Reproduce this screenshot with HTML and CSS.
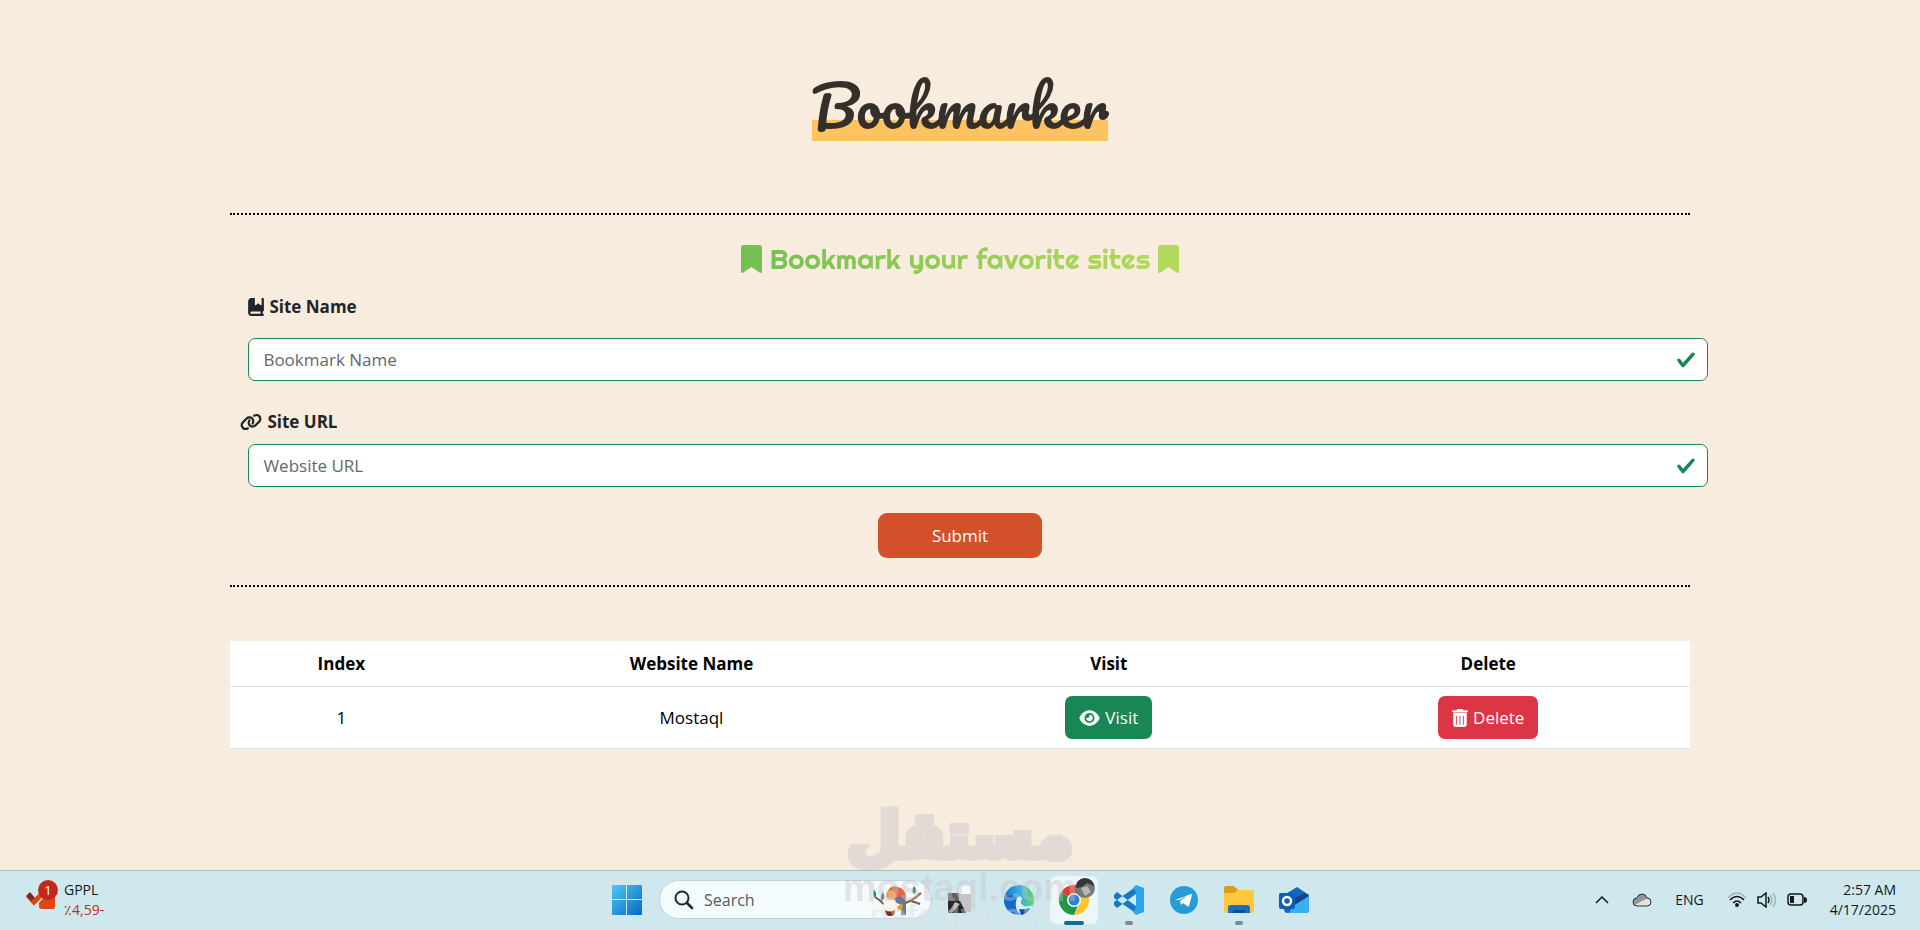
FILE: index.html
```html
<!DOCTYPE html>
<html lang="en">
<head>
  <meta charset="UTF-8">
  <meta name="viewport" content="width=device-width, initial-scale=1.0">
  <title>Bookmarker</title>
  <link rel="stylesheet" href="styles.css">
</head>
<body>
  <main class="container">
    <!-- Title -->
    <header class="page-header">
      <h1 class="title">Bookmarker</h1>
    </header>

    <!-- Bookmark Form -->
    <form class="bookmark-form">
      <h2 class="subtitle">
        <svg class="icon-mark" viewBox="0 0 384 512"><path fill="#77c153" d="M0 48V487.700C0 501 11 512 24.300 512c5 0 9.900-1.500 14-4.400L192 400 345.700 507.600c4.100 2.900 9 4.400 14 4.400 13.400 0 24.300-11 24.300-24.300V48c0-26.500-21.500-48-48-48H48C21.500 0 0 21.500 0 48z"/></svg>
        <span class="subtitle-text">Bookmark your favorite sites</span>
        <svg class="icon-mark" viewBox="0 0 384 512"><path fill="#b2d95b" d="M0 48V487.700C0 501 11 512 24.300 512c5 0 9.900-1.500 14-4.400L192 400 345.700 507.600c4.100 2.900 9 4.400 14 4.400 13.400 0 24.300-11 24.300-24.300V48c0-26.500-21.500-48-48-48H48C21.500 0 0 21.500 0 48z"/></svg>
      </h2>

      <label class="label-name" for="siteName">
        <svg class="icon-book" viewBox="0 0 448 512"><path fill="currentColor" fill-rule="evenodd" d="M0 96C0 43 43 0 96 0h96v190.700c0 13.400 15.500 20.900 26 12.500l70-56 70 56c10.500 8.400 26 .9 26-12.500V0h32c17.700 0 32 14.300 32 32v320c0 17.700-14.300 32-32 32v64c17.700 0 32 14.300 32 32s-14.300 32-32 32H96c-53 0-96-43-96-96V96zm64 320c0 17.700 14.300 32 32 32h256v-64H96c-17.700 0-32 14.300-32 32z"/></svg>
        Site Name
      </label>
      <div class="field">
        <input class="form-control" type="text" id="siteName" placeholder="Bookmark Name">
      </div>

      <label class="label-url" for="siteUrl">
        <svg class="icon-link" viewBox="0 0 640 512"><path fill="currentColor" d="M579.800 267.700c56.500-56.500 56.500-148 0-204.500-50-50-128.800-56.500-186.300-15.400l-1.600 1.100c-14.400 10.300-17.700 30.300-7.400 44.600s30.300 17.700 44.600 7.400l1.600-1.100c32.100-22.900 76-19.300 103.800 8.600 31.500 31.500 31.500 82.500 0 114L422.300 334.800c-31.500 31.500-82.500 31.500-114 0-27.900-27.900-31.500-71.800-8.600-103.800l1.100-1.600c10.300-14.400 6.900-34.400-7.400-44.600s-34.400-6.900-44.600 7.400l-1.100 1.600C206.500 251.200 213 330 263 380c56.500 56.500 148 56.500 204.500 0L579.800 267.700zM60.200 244.300c-56.500 56.500-56.500 148 0 204.500 50 50 128.800 56.500 186.300 15.400l1.600-1.100c14.400-10.300 17.700-30.300 7.400-44.600s-30.300-17.700-44.600-7.400l-1.600 1.100c-32.100 22.900-76 19.300-103.800-8.600C74 372 74 321 105.500 289.500L217.700 177.200c31.500-31.500 82.500-31.500 114 0 27.900 27.900 31.500 71.800 8.600 103.900l-1.100 1.600c-10.300 14.400-6.900 34.400 7.400 44.600s34.400 6.900 44.600-7.400l1.100-1.600C433.500 260.800 427 182 377 132c-56.500-56.500-148-56.500-204.500 0L60.200 244.300z"/></svg>
        Site URL
      </label>
      <div class="field">
        <input class="form-control" type="text" id="siteUrl" placeholder="Website URL">
      </div>

      <button class="submit-btn" type="submit">Submit</button>
    </form>

    <!-- Bookmarks Table -->
    <table class="table">
      <thead>
        <tr>
          <th class="col-index">Index</th>
          <th class="col-name">Website Name</th>
          <th class="col-visit">Visit</th>
          <th class="col-delete">Delete</th>
        </tr>
      </thead>
      <tbody>
        <tr>
          <td>1</td>
          <td>Mostaql</td>
          <td>
            <button class="btn btn-visit" type="button">
              <svg class="icon-eye" viewBox="0 0 576 512"><path fill="currentColor" fill-rule="evenodd" d="M288 32c-80.800 0-145.500 36.800-192.600 80.600C48.600 156 17.300 208 2.500 243.700c-3.300 7.900-3.300 16.700 0 24.600C17.300 304 48.600 356 95.400 399.400 142.500 443.200 207.200 480 288 480s145.500-36.800 192.600-80.600c46.800-43.500 78.100-95.400 93-131.100 3.300-7.900 3.300-16.700 0-24.600-14.900-35.700-46.200-87.700-93-131.100C433.500 68.800 368.800 32 288 32zM144 256a144 144 0 1 1 288 0 144 144 0 1 1-288 0zm144-64c0 35.300-28.700 64-64 64-7.100 0-13.900-1.200-20.300-3.300-5.500-1.800-11.900 1.600-11.700 7.400.3 6.900 1.300 13.800 3.200 20.700 13.700 51.200 66.400 81.600 117.600 67.900s81.600-66.400 67.900-117.600c-11.100-41.500-47.800-69.400-88.600-71.100-5.800-.2-9.200 6.100-7.400 11.700 2.100 6.400 3.300 13.200 3.300 20.300z"/></svg>
              Visit
            </button>
          </td>
          <td>
            <button class="btn btn-delete" type="button">
              <svg class="icon-trash" viewBox="0 0 448 512"><path fill="currentColor" fill-rule="evenodd" d="M135.200 17.700C140.600 6.800 151.700 0 163.800 0h120.400c12.100 0 23.200 6.800 28.600 17.700L320 32h96c17.700 0 32 14.300 32 32s-14.300 32-32 32H32C14.300 96 0 81.700 0 64s14.300-32 32-32h96l7.200-14.300zM32 116h384v332c0 35.300-28.700 64-64 64H96c-35.300 0-64-28.700-64-64V116zm84 76v256h24V192h-24zm96 0v256h24V192h-24zm96 0v256h24V192h-24z"/></svg>
              Delete
            </button>
          </td>
        </tr>
      </tbody>
    </table>
  </main>

  <!-- Taskbar -->
  <footer class="taskbar">
    <div class="widget">
      <svg class="widget-icon" viewBox="0 0 34 32">
        <path d="M3 15l6 7 7-7" fill="none" stroke="#d9480f" stroke-width="5"/>
        <path d="M1 16l4-4 5 6-4 3z" fill="#7c2d1b"/>
        <path d="M14 23l5-6h11v10q0 2-2 2H17q-3 0-3-3z" fill="#dc4a0b"/>
        <circle cx="23" cy="10" r="10" fill="#c4281c"/>
        <text x="23" y="15" text-anchor="middle" class="badge-text">1</text>
      </svg>
      <div class="widget-text">
        <span>GPPL</span>
        <span class="widget-change">٪4,59-</span>
      </div>
    </div>

    <div class="apps">
      <button class="app" type="button" aria-label="Start">
        <svg width="30" height="30" viewBox="0 0 30 30">
          <defs><linearGradient id="win" x1="0" y1="0" x2="1" y2="1"><stop offset="0" stop-color="#4cc8f2"/><stop offset="1" stop-color="#0668c4"/></linearGradient></defs>
          <path fill="url(#win)" d="M1 0h13v14H0V1q0-1 1-1zM15 0h14q1 0 1 1v13H15zM0 15h14v15H1q-1 0-1-1zM15 15h15v14q0 1-1 1H15z"/>
        </svg>
      </button>
      <div class="search-bar">
        <svg width="20" height="20" viewBox="0 0 20 20"><circle cx="8" cy="8" r="6.500" fill="none" stroke="#23282c" stroke-width="2"/><path d="M13 13l5 5" stroke="#23282c" stroke-width="2.500" stroke-linecap="round"/></svg>
        <input type="text" placeholder="Search" aria-label="Search">
        <svg class="bird" width="54" height="36" viewBox="0 0 54 36">
          <path d="M4 15q10 6 14 16M31 22q9-2 19-11M40 19l9 3" fill="none" stroke="#8a4a32" stroke-width="2"/>
          <path d="M3 8q4 3 1 8-3-4-1-8zM12 10q3 5-1 9-3-4 1-9zM43 4q4 5 0 8-3-3 0-8z" fill="#24806a"/>
          <path d="M16 12Q18 2 27 5q9 3 8 11-4 5-9 3-7-2-10-7z" fill="#e0683f"/>
          <circle cx="20" cy="13" r="5" fill="#f2a05e"/>
          <path d="M26 15q8-2 9 4v14h-5V23l-6-3z" fill="#697895"/>
          <circle cx="19" cy="24" r="7" fill="#f8f3e8"/>
          <path d="M14 28q5 3 10 0 0 6-5 6t-5-6z" fill="#7b2c15"/>
          <path d="M26 25l5-4 1 4-4 4z" fill="#e99a26"/>
        </svg>
      </div>
      <button class="app app-view" type="button" aria-label="Task view">
        <svg width="24" height="28" viewBox="0 0 24 28">
          <path d="M11 0h10q2 0 2 2v8H11z" fill="#f6f7f7"/>
          <path d="M0 7h11v8H0z" fill="#5f5f60"/><path d="M11 8h12v18H11z" fill="#c5c3c4"/>
          <path d="M0 15h12l6 12H2q-2 0-2-2z" fill="#252628"/><path d="M1 26l6-10 5 2-8 9z" fill="#aaa9aa"/>
        </svg>
      </button>
      <button class="app" type="button" aria-label="Edge">
        <svg width="30" height="30" viewBox="0 0 30 30">
          <defs><linearGradient id="edge" x1="0" y1="0" x2="1" y2="0"><stop offset="0" stop-color="#1673d1"/><stop offset=".55" stop-color="#35b4df"/><stop offset="1" stop-color="#63d45c"/></linearGradient></defs>
          <circle cx="15" cy="15" r="15" fill="url(#edge)"/>
          <path d="M0 14Q7 7 13 13q-4 9 3 16Q1 30 0 14z" fill="#126bc8"/>
          <path d="M13 13q4-4 5 1-3 5 2 7 5 1 9-1-3 8-11 10-9-5-5-17z" fill="#d9eef5"/>
          <path d="M15 24q6 1 11-1-3 6-9 7z" fill="#12549f"/>
        </svg>
      </button>
      <button class="app app-active" type="button" aria-label="Chrome">
        <svg class="app-tile" width="48" height="48" viewBox="0 0 48 48">
          <path d="M24 24L11 16.500A15 15 0 0 1 37 16.500z" fill="#e33b2e"/>
          <path d="M11 16.500A15 15 0 0 0 24 39l5-12-5-3z" fill="#249447"/>
          <path d="M37 16.500A15 15 0 0 1 24 39l6-12-2-10.500z" fill="#fbc52b"/>
          <circle cx="24" cy="24" r="7" fill="#fff"/><circle cx="24" cy="24" r="5.500" fill="#2d7fdc"/>
          <circle cx="35" cy="12" r="10" fill="#75797a"/>
          <path d="M26 12q0-9 9-10 8 1 9 8l-7-3-5 4z" fill="#333738"/>
          <path d="M31 12l6-2 4 6-6 4z" fill="#b4b9ba"/>
        </svg>
        <span class="indicator indicator-active"></span>
      </button>
      <button class="app" type="button" aria-label="Visual Studio Code">
        <svg width="30" height="30" viewBox="0 0 30 30">
          <path d="M0 10l3-3 20 15v7L0 13zM0 20l3 3L23 8V1L0 17z" fill="#1279c8"/>
          <path d="M22 0l8 3v24l-8 3-3-3 3-5V8l-3-5z" fill="#2ba4ed"/>
        </svg>
        <span class="indicator"></span>
      </button>
      <button class="app" type="button" aria-label="Telegram">
        <svg width="28" height="28" viewBox="0 0 28 28">
          <circle cx="14" cy="14" r="14" fill="#269bd8"/>
          <path d="M5 14l16-6q1 0 1 1l-3 11q-1 1-2 0l-4-3-2 2-1-4 8-6-9 5z" fill="#fff"/>
        </svg>
      </button>
      <button class="app" type="button" aria-label="File Explorer">
        <svg width="30" height="28" viewBox="0 0 30 28">
          <path d="M0 2q0-2 2-2h8l4 4v6H0z" fill="#dd9b1e"/>
          <path d="M0 7h10l4-3h14q2 0 2 2v20q0 1-2 1H2q-2 0-2-2z" fill="#fdc93b"/>
          <path d="M4 27v-5q0-3 3-3h16q3 0 3 3v5z" fill="#1671c5"/><path d="M9 24h12v3H9z" fill="#0d4f97"/>
        </svg>
        <span class="indicator"></span>
      </button>
      <button class="app" type="button" aria-label="Outlook">
        <svg width="30" height="28" viewBox="0 0 30 28">
          <path d="M5 9l13-8 12 8v15q0 3-3 3H9q-4 0-4-4z" fill="#1767b8"/>
          <path d="M14 13l12-6 4 3-14 9z" fill="#15438c"/><path d="M14 20l16-10v14q0 3-3 3H10z" fill="#3aaef0"/>
          <rect x="0" y="7" width="16" height="16" rx="2" fill="#0b5fb4"/>
          <circle cx="8" cy="15" r="4" fill="none" stroke="#fff" stroke-width="2.500"/>
        </svg>
      </button>
    </div>

    <div class="tray">
      <svg width="14" height="8" viewBox="0 0 14 8"><path d="M1 7l6-6 6 6" fill="none" stroke="#15191b" stroke-width="1.500"/></svg>
      <svg class="tray-cloud" width="20" height="14" viewBox="0 0 20 14">
        <path d="M5 13Q1 13 1 9q0-4 4-4 1-4 5-4t5 4q4 0 4 4t-4 4z" fill="#92979b"/>
        <path d="M3 12q5-3 13-7 4 2 2 6-1 2-3 2H5z" fill="#e9e2e5"/>
        <path d="M5 13Q1 13 1 9q0-4 4-4 1-4 5-4t5 4q4 0 4 4t-4 4z" fill="none" stroke="#2d3032"/>
      </svg>
      <span class="tray-lang">ENG</span>
      <div class="tray-status">
        <svg width="20" height="16" viewBox="0 0 20 16"><path d="M1 6q9-10 18 0" fill="none" stroke="#a2b4b8" stroke-width="1.500"/><path d="M3 8q7-7 14 0M6 11q4-4 8 0" fill="none" stroke="#16191b" stroke-width="1.500"/><circle cx="10" cy="13" r="2" fill="#16191b"/></svg>
        <svg width="20" height="16" viewBox="0 0 20 16"><path d="M1 5h3l5-4v14l-5-4H1zM11 5q2 3 0 6" fill="none" stroke="#16191b" stroke-width="1.500"/><path d="M13 3q4 5 0 10M16 1q5 7 0 14" fill="none" stroke="#9fb3b7" stroke-width="1.500"/></svg>
        <svg width="20" height="14" viewBox="0 0 20 14"><rect x="1" y="1" width="15" height="11" rx="3" fill="none" stroke="#16191b" stroke-width="1.500"/><rect x="3" y="3" width="4" height="7" fill="#16191b"/><path d="M17 4q3 0 3 3t-3 3z" fill="#16191b"/></svg>
      </div>
      <div class="clock">
        <span>2:57 AM</span>
        <span>4/17/2025</span>
      </div>
    </div>
  </footer>

  <!-- Watermark -->
  <div class="watermark" aria-hidden="true">
    <span class="watermark-logo" lang="ar">مستقل</span>
    <span class="watermark-site">mostaql.com</span>
    <span class="watermark-sub">nafezly.com</span>
  </div>
</body>
</html>
```

FILE: styles.css
```css
/* General Styles */
* {
  box-sizing: border-box;
}

body {
  margin: 0;
  position: relative;
  display: flex;
  flex-direction: column;
  min-height: 100vh;
  overflow-x: hidden;
  background-color: #f7ecde;
  color: #212529;
  font-family: "Segoe UI", "Open Sans", sans-serif;
  font-size: 17px;
  line-height: 27px;
}

button,
input {
  font: inherit;
}

.container {
  flex: 1;
  width: 76%;
  margin: 0 auto;
}

/* Title */
.page-header {
  display: flex;
  justify-content: center;
  padding: 70px 0 72px;
}

.title {
  margin: 0;
  color: #352f29;
  font-family: Pacifico, cursive;
  font-size: 56px;
  font-weight: 400;
  line-height: 71px;
  background: linear-gradient(transparent 50px, #fec260 50px);
}

/* Form */
.bookmark-form {
  display: flex;
  flex-direction: column;
  border-top: 2px dotted #000;
  border-bottom: 2px dotted #000;
  padding: 27px 0;
}

.subtitle {
  display: flex;
  justify-content: center;
  align-items: center;
  gap: 8px;
  margin: 0 0 17px;
  font-family: Righteous, sans-serif;
  font-size: 28px;
  font-weight: 400;
  line-height: 34px;
}

.subtitle-text {
  color: transparent;
  background: linear-gradient(to right, #77c153, #b2d95b);
  background-clip: text;
  -webkit-background-clip: text;
}

.icon-mark {
  width: 21px;
  height: 28px;
}

.label-name,
.label-url {
  display: flex;
  align-items: center;
  align-self: flex-start;
  gap: 5px;
  font-weight: 700;
}

.label-name {
  margin: 0 0 18px 18px;
}

.label-url {
  margin: 27px 0 9px 10px;
}

.icon-book {
  width: 16px;
  height: 18px;
}

.icon-link {
  width: 22px;
  height: 18px;
}

.field {
  width: 100%;
  margin-left: 18px;
}

.form-control {
  display: block;
  width: 100%;
  height: 43px;
  padding: 0 48px 0 14px;
  color: #212529;
  border: 1px solid #198754;
  border-radius: 7px;
  background: #fff url("data:image/svg+xml,%3csvg xmlns='http://www.w3.org/2000/svg' viewBox='0 0 8 8'%3e%3cpath fill='%23198754' d='M2.300 6.730.6 4.530c-.4-1.040.46-1.400 1.100-.8l1.100 1.400 3.400-3.800c.6-.63 1.600-.27 1.200.7l-4 4.600c-.43.5-.8.4-1.100.1z'/%3e%3c/svg%3e") no-repeat right 11px center / 20px 20px;
}

.form-control::placeholder {
  color: #62686c;
  opacity: 1;
}

.submit-btn {
  align-self: center;
  width: 164px;
  height: 45px;
  margin-top: 26px;
  border: none;
  border-radius: 9px;
  background-color: #d2512b;
  color: #fff;
  cursor: pointer;
}

/* Table */
.table {
  width: 100%;
  margin: 54px 0 18px;
  border-collapse: collapse;
  table-layout: fixed;
  background-color: #fff;
  color: #000;
  text-align: center;
}

.table th,
.table td {
  padding: 9px;
  border-bottom: 1px solid #dee2e6;
}

.col-index {
  width: 15.2%;
}

.col-name {
  width: 32.8%;
}

.col-visit {
  width: 24.4%;
}

.col-delete {
  width: 27.6%;
}

.btn {
  display: inline-flex;
  align-items: center;
  gap: 5px;
  height: 43px;
  padding: 0 14px;
  border: none;
  border-radius: 7px;
  color: #fff;
  vertical-align: middle;
  cursor: pointer;
}

.btn-visit {
  background-color: #198754;
}

.btn-delete {
  background-color: #dc3545;
}

.icon-eye {
  width: 21px;
  height: 18px;
}

.icon-trash {
  width: 16px;
  height: 18px;
}

/* Taskbar */
.taskbar {
  display: grid;
  grid-template-columns: 1fr auto 1fr;
  align-items: center;
  height: 60px;
  padding-bottom: 2px;
  border-top: 1px solid #a9bcbf;
  background-color: #cfe8ed;
  color: #15191b;
  font-size: 14px;
  line-height: 20px;
}

.widget {
  display: flex;
  gap: 5px;
  padding-left: 25px;
}

.widget-icon {
  width: 34px;
  height: 32px;
}

.badge-text {
  fill: #fff;
  font-size: 13px;
}

.widget-text,
.clock {
  display: flex;
  flex-direction: column;
}

.widget-change {
  color: #c4281c;
}

.apps {
  display: flex;
  align-items: center;
}

.app {
  position: relative;
  display: flex;
  justify-content: center;
  align-items: center;
  width: 55px;
  height: 50px;
  padding: 0;
  border: none;
  background: none;
}

.app-view {
  margin-right: 4px;
}

.app-tile {
  border-radius: 6px;
  background-color: #edf6f9;
}

.indicator {
  position: absolute;
  bottom: 0;
  left: 50%;
  width: 8px;
  height: 4px;
  margin-left: -4px;
  border-radius: 2px;
  background-color: #7c888d;
}

.indicator-active {
  width: 20px;
  margin-left: -10px;
  background-color: #146a9c;
}

.search-bar {
  display: flex;
  align-items: center;
  width: 273px;
  height: 39px;
  margin-left: 5px;
  padding: 0 6px 0 14px;
  border: 1px solid #c0d4da;
  border-radius: 20px;
  background-color: #f4fbfd;
}

.search-bar input {
  flex: 1;
  min-width: 0;
  padding: 0 10px;
  border: none;
  background: none;
  font-size: 16px;
}

.search-bar input::placeholder {
  color: #54595c;
  opacity: 1;
}

.tray {
  display: flex;
  justify-content: flex-end;
  align-items: center;
  gap: 23px;
  padding-right: 24px;
}

.tray-status {
  display: flex;
  align-items: center;
  gap: 10px;
}

.clock {
  text-align: right;
}

/* Watermark */
.watermark {
  position: absolute;
  right: 0;
  bottom: 0;
  left: 0;
  display: flex;
  flex-direction: column;
  align-items: center;
  padding-bottom: 2px;
  color: #c3c3ca;
  font-family: "DejaVu Sans", sans-serif;
  font-weight: 700;
  opacity: 0.4;
  pointer-events: none;
}

.watermark-logo {
  font-size: 62px;
  line-height: 76px;
  -webkit-text-stroke: 7px #c3c3ca;
}

.watermark-site,
.watermark-sub {
  font-family: "Liberation Sans", sans-serif;
}

.watermark-site {
  font-size: 38px;
  line-height: 28px;
}

.watermark-sub {
  color: #dcdce0;
  font-size: 32px;
  line-height: 26px;
}
```
